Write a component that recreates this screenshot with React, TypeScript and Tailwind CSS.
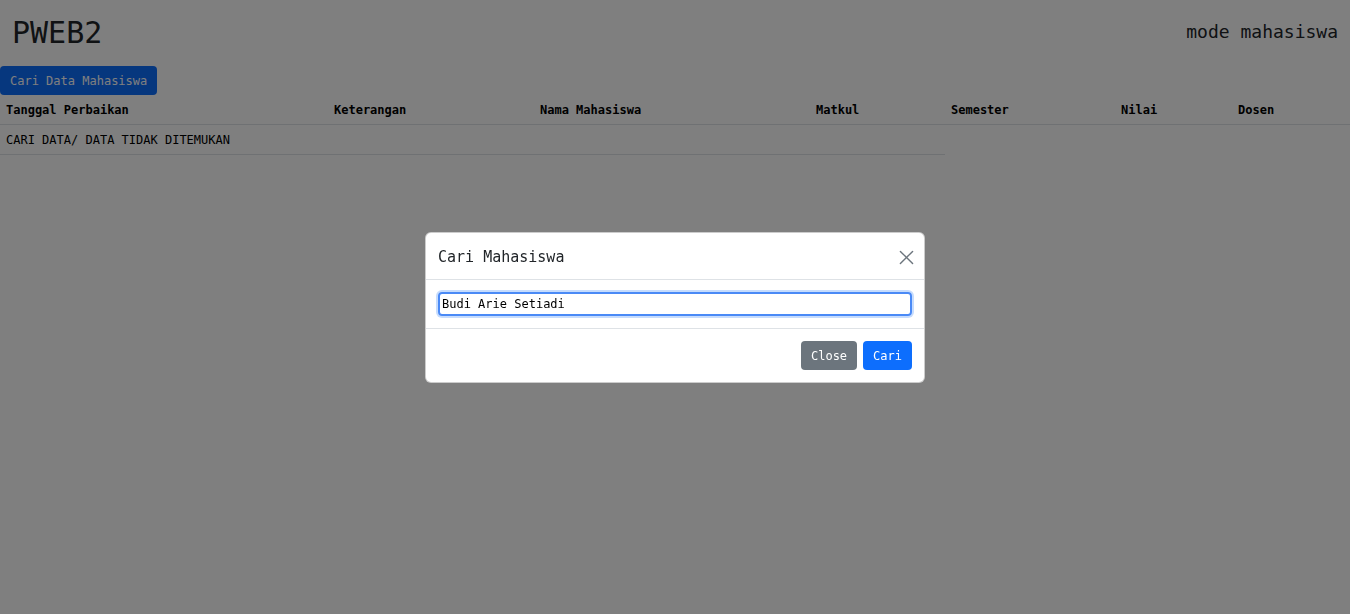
import React from "react";

const cols = "grid grid-cols-[328px_206px_276px_135px_170px_117px_118px]";

function XIcon() {
  return (
    <svg width="15" height="15" viewBox="0 0 16 16" fill="none" stroke="#6c757d" strokeWidth="1.5" strokeLinecap="round">
      <path d="M1.5 1.5 L14.5 14.5 M14.5 1.5 L1.5 14.5" />
    </svg>
  );
}

export default function App() {
  const headers = ["Tanggal Perbaikan", "Keterangan", "Nama Mahasiswa", "Matkul", "Semester", "Nilai", "Dosen"];
  return (
    <div className="relative min-h-[614px] w-full bg-white text-[#212529] font-['DejaVu_Sans_Mono',monospace]">
      <div className="flex h-[66px] items-start justify-between px-3">
        <div className="pt-[15px] text-[30px] leading-[36px]">PWEB2</div>
        <div className="pt-[18px] text-[18px] leading-[27px]">mode mahasiswa</div>
      </div>
      <button className="flex h-[29px] items-center rounded-[4px] bg-[#0d6efd] px-[10px] text-[12px] leading-[18px] text-white">
        Cari Data Mahasiswa
      </button>
      <div className={`${cols} border-b border-[#dee2e6] text-[12px] leading-[18px] font-bold text-black`}>
        {headers.map((h) => (
          <div key={h} className="pl-[6px] pt-[6px] pb-[5px]">{h}</div>
        ))}
      </div>
      <div className={cols}>
        <div className="col-span-4 border-b border-[#dee2e6] pl-[6px] pt-[6px] pb-[5px] text-[12px] leading-[18px] text-black">
          CARI DATA/ DATA TIDAK DITEMUKAN
        </div>
      </div>

      <div className="fixed inset-0 flex items-center justify-center bg-black/50">
        <div className="w-[500px] rounded-[6px] border border-black/20 bg-white">
          <div className="flex items-center justify-between border-b border-[#dee2e6] pl-3 pr-[10px] pt-[13px] pb-[10px]">
            <div className="text-[15px] leading-[23px] text-[#212529]">Cari Mahasiswa</div>
            <div><XIcon /></div>
          </div>
          <div className="border-b border-[#dee2e6] p-3">
            <div className="flex h-[24px] items-center rounded-[4px] border-2 border-[#4a8af6] pl-[2px] text-[12px] leading-[18px] text-black shadow-[0_0_0_2px_#c6dcfd]">
              Budi Arie Setiadi
            </div>
          </div>
          <div className="flex justify-end gap-[6px] p-3">
            <button className="flex h-[29px] items-center rounded-[4px] bg-[#6c757d] px-[10px] pt-[1px] text-[12px] leading-[18px] text-white">Close</button>
            <button className="flex h-[29px] items-center rounded-[4px] bg-[#0d6efd] px-[10px] pt-[1px] text-[12px] leading-[18px] text-white">Cari</button>
          </div>
        </div>
      </div>
    </div>
  );
}
